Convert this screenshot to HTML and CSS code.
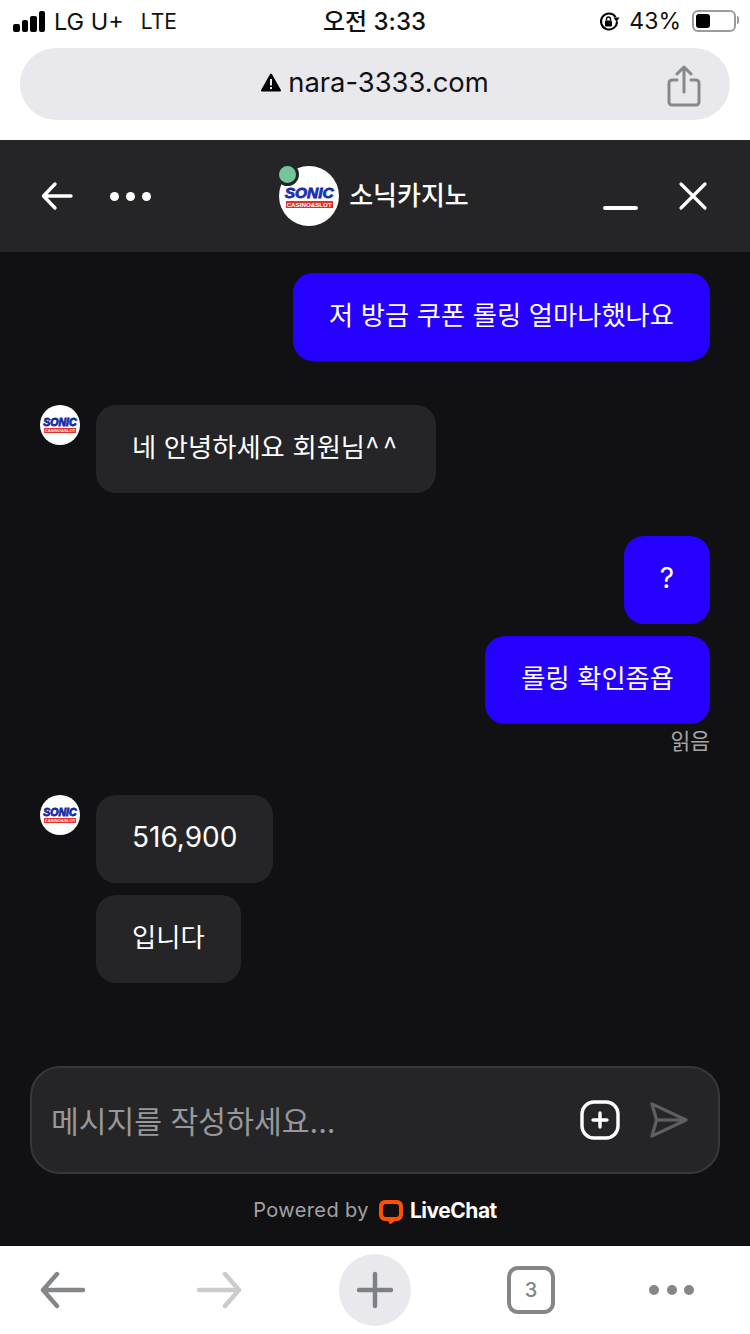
FILE: index.html
```html
<!DOCTYPE html>
<html>
<head>
    <title>소닉카지노</title>
    <link rel="stylesheet" href="styles.css">
</head>
<body>
    <div class="status-bar">
        <div class="status-left">
            <div class="signal"><i></i><i></i><i></i><i></i></div>
            <span class="carrier">LG U+</span>
            <span class="lte">LTE</span>
        </div>
        <div class="status-time">오전 3:33</div>
        <div class="status-right">
            <svg width="22" height="21" viewBox="0 0 22 21" fill="none">
                <path d="M17.600 6A8 8 0 1 0 19 10.500" stroke="#000" stroke-width="2"/>
                <path d="M15.500 6.500h6L18.500 11z" fill="#000"/>
                <rect x="7" y="9.500" width="7" height="6" rx="1" fill="#000"/>
                <path d="M8.500 9.500V8a2 2 0 0 1 4 0v1.500" stroke="#000" stroke-width="1.400"/>
            </svg>
            <span>43%</span>
            <div class="battery"><div class="battery-level"></div></div>
        </div>
    </div>

    <div class="address-wrap">
        <div class="address-bar">
            <div class="address-text">
                <svg width="20" height="19" viewBox="0 0 20 19">
                    <path d="M10 1.500 19 17.500H1z" fill="#000" stroke="#000" stroke-width="2" stroke-linejoin="round"/>
                    <rect x="9" y="6" width="2" height="6.500" fill="#e8e8ed"/>
                    <rect x="9" y="14" width="2" height="2" fill="#e8e8ed"/>
                </svg>
                <span>nara-3333.com</span>
            </div>
            <svg class="share-icon" width="34" height="42" viewBox="0 0 34 42" fill="none" stroke="#85898b" stroke-width="3" stroke-linecap="round" stroke-linejoin="round">
                <path d="M10 15H5a3 3 0 0 0-3 3v19a3 3 0 0 0 3 3h24a3 3 0 0 0 3-3V18a3 3 0 0 0-3-3h-5"/>
                <path d="M17 27V3M10 9l7-7 7 7"/>
            </svg>
        </div>
    </div>

    <div class="chat">
        <div class="chat-header">
            <div class="header-left">
                <svg width="32" height="30" viewBox="0 0 32 30" fill="none" stroke="#fff" stroke-width="3.400" stroke-linecap="round" stroke-linejoin="round">
                    <path d="M30 15H3M14 3 2.500 15 14 27"/>
                </svg>
                <div class="dots"><i></i><i></i><i></i></div>
            </div>
            <div class="header-center">
                <div class="avatar avatar-big">
                    <div class="logo">
                        <span class="logo-top">SONIC</span>
                        <span class="logo-bottom">CASINO&amp;SLOT</span>
                    </div>
                    <div class="online"></div>
                </div>
                <span class="agent-name">소닉카지노</span>
            </div>
            <div class="header-right">
                <div class="minimize"></div>
                <svg width="30" height="30" viewBox="0 0 30 30" stroke="#fff" stroke-width="3.200" stroke-linecap="round">
                    <path d="M3 3l24 24M27 3 3 27"/>
                </svg>
            </div>
        </div>

        <div class="messages">
            <div class="row row-me"><div class="bubble bubble-me">저 방금 쿠폰 롤링 얼마나했나요</div></div>

            <div class="row row-agent gap-big">
                <div class="avatar avatar-small">
                    <div class="logo"><span class="logo-top">SONIC</span><span class="logo-bottom">CASINO&amp;SLOT</span></div>
                </div>
                <div class="bubble">네 안녕하세요 회원님<span class="carets">^^</span></div>
            </div>

            <div class="row row-me gap-mid"><div class="bubble bubble-me bubble-latin">?</div></div>
            <div class="row row-me gap-small"><div class="bubble bubble-me">롤링 확인좀욥</div></div>
            <div class="read-mark">읽음</div>

            <div class="row row-agent gap-read">
                <div class="avatar avatar-small">
                    <div class="logo"><span class="logo-top">SONIC</span><span class="logo-bottom">CASINO&amp;SLOT</span></div>
                </div>
                <div class="bubble bubble-latin">516,900</div>
            </div>
            <div class="row row-agent gap-small">
                <div class="avatar-space"></div>
                <div class="bubble">입니다</div>
            </div>
        </div>

        <div class="composer">
            <span class="placeholder">메시지를 작성하세요...</span>
            <div class="composer-icons">
                <svg width="40" height="40" viewBox="0 0 40 40" fill="none" stroke="#fff" stroke-linecap="round">
                    <rect x="2" y="2" width="36" height="36" rx="12" stroke-width="3.400"/>
                    <path d="M20 13v14M13 20h14" stroke-width="3.400"/>
                </svg>
                <svg width="38" height="38" viewBox="0 0 40 38" fill="none" stroke="#5e5f63" stroke-width="3.400" stroke-linejoin="round">
                    <path d="M2 2 38 19 2 36 7 19z"/>
                    <path d="M7 19h31"/>
                </svg>
            </div>
        </div>

        <div class="powered">
            <span>Powered by</span>
            <svg class="livechat-logo" width="24" height="24" viewBox="0 0 24 24">
                <path d="M6 0h12a6 6 0 0 1 6 6v9a6 6 0 0 1-6 6h-2l-5 3.500-2-3.500H6a6 6 0 0 1-6-6V6a6 6 0 0 1 6-6z" fill="#ff5100"/>
                <rect x="4" y="4" width="16" height="13" rx="3" fill="#111113"/>
            </svg>
            <span class="brand">LiveChat</span>
        </div>
    </div>

    <div class="bottom-nav">
        <svg class="nav-back" width="46" height="38" viewBox="0 0 46 38" fill="none" stroke="#83878a" stroke-width="4.400" stroke-linecap="round" stroke-linejoin="round">
            <path d="M43 19H4M17 3 3 19l14 16"/>
        </svg>
        <svg width="46" height="38" viewBox="0 0 46 38" fill="none" stroke="#c9cbcd" stroke-width="4.400" stroke-linecap="round" stroke-linejoin="round">
            <path d="M3 19h39M29 3l14 16-14 16"/>
        </svg>
        <div class="new-tab">
            <svg width="38" height="38" viewBox="0 0 38 38" stroke="#7d8184" stroke-width="4.400" stroke-linecap="round">
                <path d="M19 3v32M3 19h32"/>
            </svg>
        </div>
        <div class="tabs">3</div>
        <div class="nav-dots"><i></i><i></i><i></i></div>
    </div>
</body>
</html>
```

FILE: styles.css
```css
* {
    box-sizing: border-box;
}
html, body {
    margin: 0;
    padding: 0;
}
body {
    width: 750px;
    height: 1334px;
    overflow: hidden;
    display: flex;
    flex-direction: column;
    background: #fff;
    font-family: Inter, "Noto Sans CJK KR", sans-serif;
}
.status-bar {
    height: 48px;
    padding: 0 14px 6px 13px;
    display: grid;
    grid-template-columns: 1fr auto 1fr;
    align-items: center;
    color: #111;
}
.status-left {
    display: flex;
    align-items: center;
    gap: 9px;
    font-size: 23.500px;
}
.lte {
    font-size: 21px;
    margin-left: 8px;
}
.signal {
    display: flex;
    align-items: flex-end;
    gap: 2px;
    height: 21px;
}
.signal i {
    width: 6.500px;
    background: #000;
    border-radius: 2px;
}
.signal i:nth-child(1) { height: 8px; }
.signal i:nth-child(2) { height: 12px; }
.signal i:nth-child(3) { height: 16px; }
.signal i:nth-child(4) { height: 21px; }
.status-time {
    font-weight: 500;
    font-size: 24px;
    margin-top: -3px;
}
.status-right {
    display: flex;
    align-items: center;
    justify-content: flex-end;
    gap: 9px;
    font-size: 23px;
}
.status-right span {
    margin-right: 2px;
}
.battery {
    width: 44px;
    height: 22px;
    border: 2px solid #9b9b9b;
    border-radius: 6px;
    padding: 2px;
    position: relative;
}
.battery::after {
    content: "";
    position: absolute;
    right: -5px;
    top: 4px;
    width: 2px;
    height: 8px;
    background: #9b9b9b;
    border-radius: 0 2px 2px 0;
}
.battery-level {
    width: 14px;
    height: 14px;
    background: #000;
    border-radius: 3px;
}
.address-wrap {
    height: 92px;
    padding: 0 20px;
}
.address-bar {
    height: 72px;
    border-radius: 36px;
    background: #e8e8ed;
    display: flex;
    align-items: center;
    justify-content: center;
    position: relative;
}
.address-text {
    display: flex;
    align-items: center;
    gap: 7px;
    font-size: 27.400px;
    color: #111;
    margin-top: -4px;
}
.share-icon {
    position: absolute;
    right: 29px;
    top: 17px;
}
.chat {
    flex: 1;
    min-height: 0;
    display: flex;
    flex-direction: column;
    background: #111113;
    color: #fff;
}
.chat-header {
    height: 112px;
    background: #252527;
    padding: 0 42px 0 41px;
    display: grid;
    grid-template-columns: 1fr auto 1fr;
    align-items: center;
}
.header-left {
    display: flex;
    align-items: center;
    gap: 37px;
}
.dots {
    display: flex;
    gap: 7px;
}
.dots i {
    width: 9px;
    height: 9px;
    background: #fff;
    border-radius: 50%;
}
.header-center {
    display: flex;
    align-items: center;
    gap: 10px;
    margin-left: -1px;
}
.agent-name {
    font-family: "Noto Sans CJK KR", sans-serif;
    font-size: 26px;
    font-weight: 500;
    margin-top: -5px;
}
.header-right {
    display: flex;
    align-items: center;
    justify-content: flex-end;
    gap: 40px;
}
.minimize {
    width: 35px;
    height: 4px;
    border-radius: 2px;
    background: #fff;
    margin-top: 24px;
}
.avatar {
    background: #fff;
    border-radius: 50%;
    flex-shrink: 0;
    position: relative;
    display: flex;
    align-items: center;
    justify-content: center;
}
.avatar-big {
    width: 60px;
    height: 60px;
}
.avatar-small {
    width: 40px;
    height: 40px;
    margin-right: 16px;
}
.avatar-space {
    width: 56px;
}
.online {
    position: absolute;
    top: -3px;
    left: -3px;
    width: 23px;
    height: 23px;
    border-radius: 50%;
    background: #74c69a;
    border: 3px solid #252527;
}
.logo {
    display: flex;
    flex-direction: column;
    align-items: center;
    font-family: "Liberation Sans", sans-serif;
    font-weight: bold;
    line-height: 1;
}
.logo-top {
    font-style: italic;
    color: #1a3ad0;
    -webkit-text-stroke: 0.800px #10249c;
}
.logo-bottom {
    background: #e52b2b;
    color: #fff;
    white-space: nowrap;
}
.avatar-big .logo-top {
    font-size: 15.500px;
    line-height: 16px;
}
.avatar-big .logo-bottom {
    font-size: 6.200px;
    padding: 0 1px;
    line-height: 7px;
}
.avatar-small .logo-top {
    font-size: 10.500px;
    line-height: 11px;
}
.avatar-small .logo-bottom {
    font-size: 4.200px;
    line-height: 5px;
    padding: 0 1px;
}
.messages {
    flex: 1;
    min-height: 0;
    padding: 21px 40px 0;
    display: flex;
    flex-direction: column;
}
.row {
    display: flex;
    align-items: flex-start;
}
.row-me {
    justify-content: flex-end;
}
.gap-big { margin-top: 44px; }
.gap-mid { margin-top: 43px; }
.gap-small { margin-top: 12px; }
.gap-read { margin-top: 37px; }
.bubble {
    height: 88px;
    padding: 0 36px 8px;
    display: flex;
    align-items: center;
    border-radius: 20px;
    background: #252527;
    font-family: "Noto Sans CJK KR", sans-serif;
    font-size: 26.300px;
    word-spacing: 1.750px;
    white-space: nowrap;
}
.bubble-latin {
    font-family: Inter, sans-serif;
    font-size: 28px;
    padding-bottom: 5px;
}
.bubble-me {
    background: #2600ff;
}
.carets {
    letter-spacing: 3px;
}
.read-mark {
    text-align: right;
    font-size: 21.500px;
    line-height: 34px;
    color: #a5a5a7;
}
.composer {
    margin: 0 30px;
    height: 108px;
    background: #252527;
    border: 2px solid #37373a;
    border-radius: 30px;
    padding: 0 30px 0 19px;
    display: flex;
    align-items: center;
    justify-content: space-between;
}
.placeholder {
    font-size: 30.200px;
    color: #98989a;
    margin-top: -1px;
}
.composer-icons {
    display: flex;
    align-items: center;
    gap: 30px;
}
.powered {
    height: 72px;
    display: flex;
    align-items: center;
    justify-content: center;
    gap: 10px;
    font-size: 20px;
    letter-spacing: 0.400px;
    color: #a3a3a5;
}
.livechat-logo {
    margin-top: 4px;
}
.brand {
    color: #fff;
    font-size: 21px;
    font-weight: 700;
    letter-spacing: -0.500px;
    margin-left: -3px;
}
.bottom-nav {
    height: 88px;
    padding: 0 0 0 40px;
    display: flex;
    align-items: center;
    gap: 96px;
    background: #fff;
}
.nav-back {
    margin-right: 14px;
}
.new-tab {
    width: 72px;
    height: 72px;
    margin-left: 1px;
    border-radius: 50%;
    background: #e8e8ed;
    display: flex;
    align-items: center;
    justify-content: center;
}
.tabs {
    width: 48px;
    height: 48px;
    border: 4px solid #83878a;
    border-radius: 11px;
    display: flex;
    align-items: center;
    justify-content: center;
    font-size: 20px;
    font-weight: 500;
    color: #83878a;
}
.nav-dots {
    display: flex;
    gap: 7.500px;
    margin-left: -2px;
}
.nav-dots i {
    width: 10px;
    height: 10px;
    background: #83878a;
    border-radius: 50%;
}
```
